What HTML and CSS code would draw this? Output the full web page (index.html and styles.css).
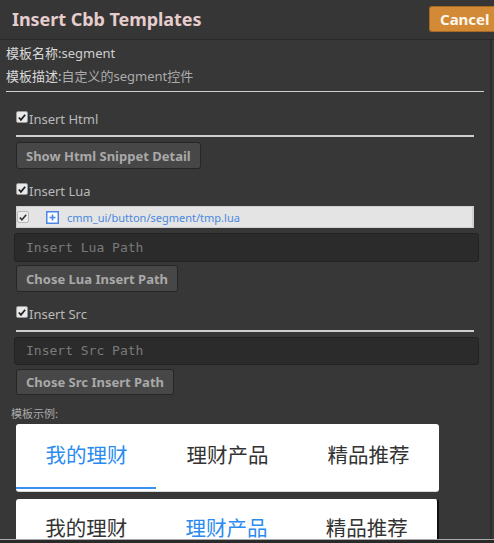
FILE: index.html
```html
<!DOCTYPE html>
<html>
<head>
<meta charset="utf-8">
<link rel="stylesheet" href="styles.css">
</head>
<body>
<div class="app">
  <header class="topbar">
    <h1 class="title">Insert Cbb Templates</h1>
    <button class="cancel">Cancel</button>
  </header>
  <div class="main">
    <div class="content">
      <div class="info">
        <div class="info-line"><span class="lbl">模板名称:</span><span class="val1">segment</span></div>
        <div class="info-line"><span class="lbl">模板描述:</span><span class="val2">自定义的segment控件</span></div>
      </div>
      <div class="rule thin"></div>

      <label class="check-row r-html"><span class="cb"><svg viewBox="0 0 11 11" width="11" height="11"><path d="M2 5.5 L4.3 8 L9 2.5" fill="none" stroke="#222" stroke-width="2"/></svg></span>Insert Html</label>
      <div class="rule thick r1"></div>
      <button class="btn b-html">Show Html Snippet Detail</button>

      <label class="check-row r-lua"><span class="cb"><svg viewBox="0 0 11 11" width="11" height="11"><path d="M2 5.5 L4.3 8 L9 2.5" fill="none" stroke="#222" stroke-width="2"/></svg></span>Insert Lua</label>
      <div class="file-row">
        <span class="cb cb-light"><svg viewBox="0 0 11 11" width="11" height="11"><path d="M2 5.5 L4.3 8 L9 2.5" fill="none" stroke="#333" stroke-width="1.8"/></svg></span>
        <svg class="plus" viewBox="0 0 13 13" width="13" height="13"><rect x="0.75" y="0.75" width="11.5" height="11.5" fill="#fff" stroke="#4a86e8" stroke-width="1.5"/><path d="M6.5 3.5 V9.5 M3.5 6.5 H9.5" stroke="#4a86e8" stroke-width="1.6"/></svg>
        <span class="file-name">cmm_ui/button/segment/tmp.lua</span>
      </div>
      <div class="input i-lua">Insert Lua Path</div>
      <button class="btn b-lua">Chose Lua Insert Path</button>

      <label class="check-row r-src"><span class="cb"><svg viewBox="0 0 11 11" width="11" height="11"><path d="M2 5.5 L4.3 8 L9 2.5" fill="none" stroke="#222" stroke-width="2"/></svg></span>Insert Src</label>
      <div class="rule thick r2"></div>
      <div class="input i-src">Insert Src Path</div>
      <button class="btn b-src">Chose Src Insert Path</button>

      <div class="example-label">模板示例:</div>
      <div class="card c1">
        <div class="tab active">我的理财</div>
        <div class="tab">理财产品</div>
        <div class="tab">精品推荐</div>
        <div class="underline"></div>
      </div>
      <div class="card c2">
        <div class="tab">我的理财</div>
        <div class="tab active">理财产品</div>
        <div class="tab">精品推荐</div>
      </div>
    </div>
    <div class="vscroll"></div>
  </div>
  <div class="hscroll"></div>
</div>
</body>
</html>
```
FILE: styles.css
```css
* { box-sizing: border-box; }
html, body { margin: 0; padding: 0; background: #373737; }
body { font-family: "Noto Sans", "Noto Sans CJK SC", sans-serif; }

.app {
  width: 494px;
  height: 543px;
  display: flex;
  flex-direction: column;
  overflow: hidden;
  background: #373737;
}

.topbar {
  height: 40px;
  flex: none;
  display: flex;
  justify-content: space-between;
  align-items: flex-start;
  border-bottom: 1px solid #292929;
  background: #363636;
}
.title {
  margin: 5px 0 0 12px;
  font-size: 18px;
  line-height: 28px;
  font-weight: 700;
  color: #e6cdcd;
  letter-spacing: -0.05px;
}
.cancel {
  margin-top: 6px;
  width: 65px;
  height: 26px;
  border: 1px solid #a86a22;
  border-right: none;
  border-radius: 3px 0 0 3px;
  background: #d28a36;
  color: #fff8ee;
  font-family: "Noto Sans", sans-serif;
  font-weight: 700;
  font-size: 15px;
  text-align: left;
  padding: 0 0 0 10px;
}

.main {
  flex: 1;
  display: flex;
  min-height: 0;
}
.content {
  flex: 1;
  overflow: hidden;
  display: flex;
  flex-direction: column;
  align-items: flex-start;
}
.vscroll {
  width: 4px;
  flex: none;
  border-left: 2px solid #2d2d2d;
  background: #3a3a3a;
}
.hscroll {
  height: 4px;
  flex: none;
  border-top: 1px solid #a9a9a9;
  background: #2a2a2a;
}

.info { padding: 2px 0 0 6px; flex: none; }
.info-line {
  font-size: 13px;
  line-height: 23px;
  height: 23px;
  white-space: nowrap;
}
.lbl { color: #d9d9d9; }
.val1 { color: #cfcfcf; }
.val2 { color: #ababab; }

.rule { background: #cfcfcf; flex: none; }
.rule.thin { margin: 3px 0 0 6px; width: 478px; height: 1px; }
.rule.thick { margin: 3px 0 0 16px; width: 458px; height: 2px; }
.rule.r1 { margin-top: 5px; }
.rule.r2 { margin-top: 5px; }

.check-row {
  display: flex;
  align-items: center;
  margin-left: 16px;
  height: 22px;
  flex: none;
  font-size: 13px;
  color: #b9b9b9;
}
.r-html { margin-top: 16px; }
.r-lua { margin-top: 11px; }
.r-src { margin-top: 11px; }

.cb {
  width: 12px;
  height: 12px;
  flex: none;
  background: #e9e9e9;
  border: 1px solid #9a9a9a;
  border-radius: 2px;
  display: flex;
  align-items: center;
  justify-content: center;
  margin-right: 1px;
  margin-top: -4px;
}
.cb svg { display: block; }

.btn {
  height: 27px;
  flex: none;
  padding: 0 9px;
  background: #474747;
  border: 1px solid #262626;
  border-radius: 3px;
  color: #a9a9a9;
  font-family: "Noto Sans", sans-serif;
  font-weight: 700;
  font-size: 13px;
  margin-left: 16px;
  white-space: nowrap;
}
.b-html { margin-top: 5px; }
.b-lua { margin-top: 3px; }
.b-src { margin-top: 4px; height: 26px; }

.file-row {
  margin: 4px 0 0 16px;
  width: 458px;
  height: 22px;
  flex: none;
  background: #e4e4e4;
  border: 1px solid #d0d0d0;
  border-right-width: 2px;
  display: flex;
  align-items: center;
}
.cb-light { background: #ececec; border-color: #b8b8b8; margin-top: 0; }
.plus { margin-left: 16px; display: block; }
.file-name {
  margin-left: 8px;
  font-size: 11px;
  color: #4a88e0;
}

.input {
  margin: 5px 0 0 14px;
  width: 465px;
  height: 29px;
  flex: none;
  background: #2b2b2b;
  border: 1px solid #222;
  border-radius: 3px;
  padding-left: 11px;
  font-family: "DejaVu Sans Mono", monospace;
  font-size: 13px;
  line-height: 27px;
  color: #7a7a7a;
}
.i-src { margin-top: 5px; height: 28px; line-height: 26px; }

.example-label {
  margin: 9px 0 0 11px;
  font-size: 11px;
  line-height: 18px;
  color: #a9a9a9;
  flex: none;
  font-family: "Noto Sans CJK SC", sans-serif;
}

.card {
  margin-left: 16px;
  width: 423px;
  background: #fff;
  border-radius: 3px;
  display: flex;
  flex: none;
  position: relative;
  font-family: "Noto Sans CJK SC", sans-serif;
}
.c1 {
  margin-top: 2px;
  height: 67px;
  box-shadow: 0 1px 0 #d8d8d8;
}
.c2 {
  margin-top: 8px;
  height: 44px;
  border-right: 2px solid #111;
  border-radius: 3px 3px 0 0;
}
.tab {
  flex: 1;
  text-align: center;
  font-size: 20.5px;
  color: #333;
  line-height: 28px;
}
.c1 .tab { padding-top: 16px; }
.c2 .tab { padding-top: 14px; }
.tab.active { color: #2b8bf0; }
.underline {
  position: absolute;
  left: 0;
  bottom: 2px;
  width: 140px;
  height: 2px;
  background: #3b8ff0;
}
```
